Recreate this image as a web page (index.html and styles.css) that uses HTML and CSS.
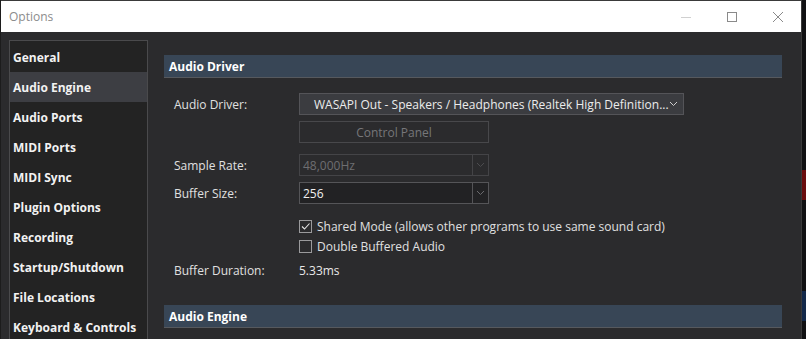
FILE: index.html
```html
<!DOCTYPE html>
<html>
<head>
  <title>Options</title>
  <link rel="stylesheet" href="styles.css">
</head>
<body>
  <div class="screen">
    <div class="window">
      <!-- title bar -->
      <div class="titlebar">
        <span class="title">Options</span>
        <div class="controls">
          <span class="ctl min"><svg width="12" height="12" viewBox="0 0 12 12"><path d="M1 6.5h10" stroke="#d0d0d0" stroke-width="1"/></svg></span>
          <span class="ctl"><svg width="12" height="12" viewBox="0 0 12 12"><rect x="1.5" y="1.5" width="9" height="9" fill="none" stroke="#8a8a8a" stroke-width="1"/></svg></span>
          <span class="ctl"><svg width="12" height="12" viewBox="0 0 12 12"><path d="M1 1l10 10M11 1L1 11" stroke="#8a8a8a" stroke-width="1"/></svg></span>
        </div>
      </div>

      <div class="main">
        <!-- category list -->
        <ul class="sidebar">
          <li>General</li>
          <li class="selected">Audio Engine</li>
          <li>Audio Ports</li>
          <li>MIDI Ports</li>
          <li>MIDI Sync</li>
          <li>Plugin Options</li>
          <li>Recording</li>
          <li>Startup/Shutdown</li>
          <li>File Locations</li>
          <li>Keyboard &amp; Controls</li>
        </ul>

        <!-- settings page -->
        <div class="content">
          <div class="section-head">Audio Driver</div>

          <div class="row r-driver">
            <span class="label">Audio Driver:</span>
            <div class="select wide">
              <span class="value">WASAPI Out - Speakers / Headphones (Realtek High Definition...</span>
              <svg class="chev" width="9" height="6" viewBox="0 0 9 6"><path d="M1 1l3.5 3.5L8 1" fill="none" stroke="#cfcfcf" stroke-width="1"/></svg>
            </div>
          </div>

          <div class="row r-button">
            <span class="label"></span>
            <div class="button">Control Panel</div>
          </div>

          <div class="row r-rate">
            <span class="label">Sample Rate:</span>
            <div class="combo disabled">
              <span class="value">48,000Hz</span>
              <span class="drop"><svg width="9" height="6" viewBox="0 0 9 6"><path d="M1 1l3.5 3.5L8 1" fill="none" stroke="#4c4c4f" stroke-width="1"/></svg></span>
            </div>
          </div>

          <div class="row r-buffer">
            <span class="label">Buffer Size:</span>
            <div class="combo">
              <span class="value">256</span>
              <span class="drop"><svg width="9" height="6" viewBox="0 0 9 6"><path d="M1 1l3.5 3.5L8 1" fill="none" stroke="#6a6a6d" stroke-width="1"/></svg></span>
            </div>
          </div>

          <div class="row r-check1">
            <span class="label"></span>
            <span class="check on"><svg width="11" height="11" viewBox="0 0 11 11"><path d="M2 5.5l2.5 2.5L9.5 2.5" fill="none" stroke="#e6e6e6" stroke-width="1.1"/></svg></span>
            <span class="check-text">Shared Mode (allows other programs to use same sound card)</span>
          </div>

          <div class="row r-check2">
            <span class="label"></span>
            <span class="check"></span>
            <span class="check-text">Double Buffered Audio</span>
          </div>

          <div class="row r-duration">
            <span class="label">Buffer Duration:</span>
            <span class="plain">5.33ms</span>
          </div>

          <div class="section-head second">Audio Engine</div>
        </div>
      </div>
    </div>

    <!-- desktop showing behind the window edge -->
    <div class="backdrop">
      <div class="bd-red"></div>
      <div class="bd-blue"></div>
    </div>
  </div>
</body>
</html>
```

FILE: styles.css
```css
html, body { margin: 0; padding: 0; }
body {
  width: 806px;
  height: 339px;
  overflow: hidden;
  background: #111113;
  font-family: "Open Sans", "Noto Sans", sans-serif;
  font-size: 12px;
}

.screen { display: flex; height: 339px; }

.window {
  width: 800px;
  border-left: 1px solid #1c1c1c;
  display: flex;
  flex-direction: column;
  background: #2b2b2d;
}

/* title bar */
.titlebar {
  height: 32px;
  background: #fff;
  display: flex;
  align-items: center;
  border-top: 1px solid #3a3a3a;
  box-sizing: border-box;
}
.title { color: #8c8c8c; font-size: 12px; margin-left: 8px; margin-top: -1px; }
.controls { margin-left: auto; display: flex; align-items: center; margin-right: 17px; }
.ctl { width: 12px; height: 12px; display: flex; margin-left: 34px; }
.ctl svg { display: block; }

.main { flex: 1; display: flex; overflow: hidden; }

/* sidebar */
.sidebar {
  list-style: none;
  margin: 8px 0 0 8px;
  padding: 1px 0 0;
  width: 137px;
  border: 1px solid #4a4a4c;
  border-bottom: none;
  background: #232323;
  color: #f2f2f2;
  font-weight: 700;
  font-size: 12px;
}
.sidebar li {
  height: 30px;
  line-height: 31px;
  padding-left: 3px;
  white-space: nowrap;
}
.sidebar li.selected { background: #3d3e43; }

/* content */
.content { margin-left: 16px; width: 618px; display: flex; flex-direction: column; padding-top: 23px; }

.section-head {
  height: 22px;
  line-height: 23px;
  background: #384656;
  border-bottom: 1px solid #56595e;
  color: #fff;
  font-weight: 700;
  font-size: 12px;
  padding-left: 5px;
}
.section-head.second { margin-top: 27px; }

.row { display: flex; align-items: center; color: #e0e0e0; }
.label { width: 125px; flex: none; padding-left: 10px; box-sizing: content-box; }

.r-driver { margin-top: 15px; height: 22px; }
.r-button { margin-top: 6px; height: 22px; }
.r-rate { margin-top: 11px; height: 22px; }
.r-buffer { margin-top: 6px; height: 22px; }
.r-check1 { margin-top: 14px; height: 16px; }
.r-check2 { margin-top: 4px; height: 16px; }
.r-duration { margin-top: 8px; height: 16px; }

.select {
  height: 22px;
  box-sizing: border-box;
  border: 1px solid #545458;
  background: #3b3c40;
  display: flex;
  align-items: center;
  color: #ececec;
}
.select.wide { width: 385px; }
.select .value { padding-left: 14px; white-space: nowrap; }
.select .chev { margin-left: auto; margin-right: 5px; }

.button {
  width: 190px;
  height: 22px;
  box-sizing: border-box;
  border: 1px solid #48484b;
  color: #77777a;
  display: flex;
  align-items: center;
  justify-content: center;
}

.combo {
  width: 190px;
  height: 22px;
  box-sizing: border-box;
  border: 1px solid #555558;
  background: #222224;
  display: flex;
  align-items: stretch;
  color: #f0f0f0;
}
.combo .value { flex: 1; padding-left: 3px; display: flex; align-items: center; }
.combo .drop {
  width: 15px;
  border-left: 1px solid #555558;
  display: flex;
  align-items: center;
  justify-content: center;
}
.combo.disabled { background: #2b2b2d; border-color: #444447; color: #6e6e71; }
.combo.disabled .drop { border-left-color: #444447; }

.check {
  width: 13px;
  height: 13px;
  box-sizing: border-box;
  border: 1px solid #9a9a9c;
  display: flex;
  align-items: center;
  justify-content: center;
  flex: none;
}
.check-text { margin-left: 5px; white-space: nowrap; }
.plain { color: #e8e8e8; }

/* desktop strip */
.backdrop {
  flex: 1;
  border-left: 1px solid #3a3a3a;
  display: flex;
  flex-direction: column;
}
.bd-red { height: 30px; margin-top: 170px; background: #6a0d0d; }
.bd-blue { height: 30px; margin-top: 91px; background: #13294a; }
```
